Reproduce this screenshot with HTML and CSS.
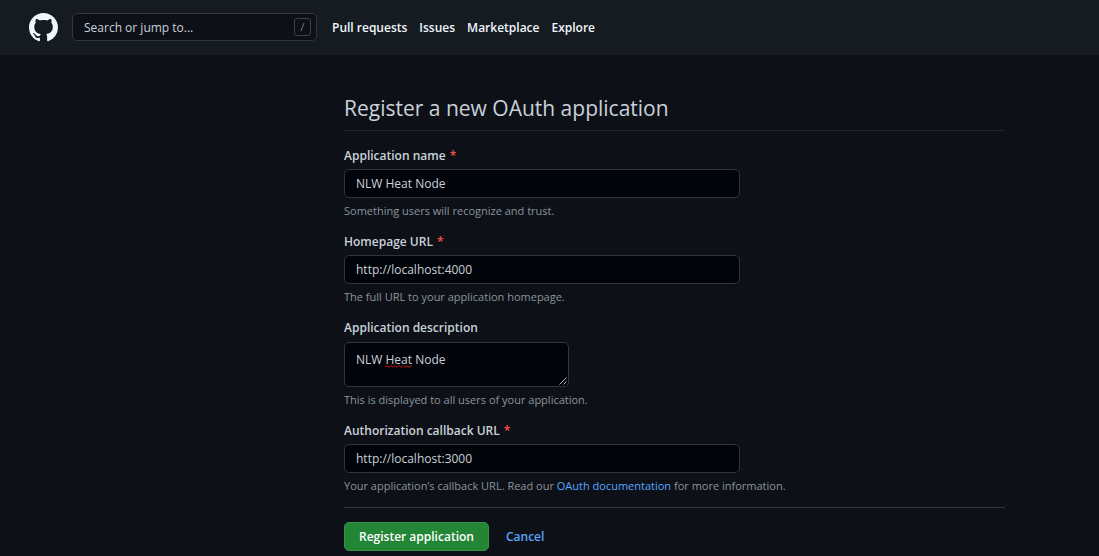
FILE: index.html
```html
<!DOCTYPE html>
<html lang="en">
<head>
<meta charset="utf-8">
<meta name="viewport" content="width=device-width, initial-scale=1">
<title>Register a new OAuth application</title>
<link rel="stylesheet" href="styles.css">
</head>
<body>
<header class="header">
  <a class="logo" href="#" aria-label="Homepage">
    <svg viewBox="0 0 16 16" width="29" height="29" aria-hidden="true"><path fill="currentColor" fill-rule="evenodd" d="M8 0C3.58 0 0 3.58 0 8c0 3.54 2.29 6.53 5.47 7.59.4.07.55-.17.55-.38 0-.19-.01-.82-.01-1.49-2.01.37-2.53-.49-2.69-.94-.09-.23-.48-.94-.82-1.13-.28-.15-.68-.52-.01-.53.63-.01 1.08.58 1.23.82.72 1.21 1.87.87 2.33.66.07-.52.28-.87.51-1.07-1.78-.2-3.64-.89-3.64-3.95 0-.87.31-1.59.82-2.15-.08-.2-.36-1.02.08-2.12 0 0 .67-.21 2.2.82.64-.18 1.32-.27 2-.27.68 0 1.36.09 2 .27 1.53-1.04 2.2-.82 2.2-.82.44 1.1.16 1.92.08 2.12.51.56.82 1.27.82 2.15 0 3.07-1.87 3.75-3.65 3.95.29.25.54.73.54 1.48 0 1.07-.01 1.93-.01 2.2 0 .21.15.46.55.38A8.013 8.013 0 0 0 16 8c0-4.42-3.58-8-8-8z"/></svg>
  </a>
  <div class="search">
    <input class="search-input" type="text" placeholder="Search or jump to..." aria-label="Search or jump to">
    <svg class="slash" viewBox="0 0 17 18" width="17" height="18" aria-hidden="true"><rect x=".5" y=".5" width="16" height="17" rx="2.5" fill="none" stroke="#3c4148"/><path d="M10 5 7 13" fill="none" stroke="#6e757d"/></svg>
  </div>
  <nav class="nav" aria-label="Global">
    <a href="#">Pull requests</a>
    <a href="#">Issues</a>
    <a href="#">Marketplace</a>
    <a href="#">Explore</a>
  </nav>
</header>
<main class="page">
  <form class="content">
    <h1 class="title">Register a new OAuth application</h1>
    <div class="field">
      <label for="app-name">Application name <span class="required">*</span></label>
      <input class="control" id="app-name" type="text" value="NLW Heat Node" required>
      <p class="hint">Something users will recognize and trust.</p>
    </div>
    <div class="field">
      <label for="app-url">Homepage URL <span class="required">*</span></label>
      <input class="control" id="app-url" type="text" value="http://localhost:4000" required>
      <p class="hint">The full URL to your application homepage.</p>
    </div>
    <div class="field">
      <label for="app-description">Application description</label>
      <div class="textarea-wrap">
        <textarea class="control textarea" id="app-description">NLW Heat Node</textarea>
        <svg class="squiggle" viewBox="0 0 27 3" width="27" height="3" aria-hidden="true"><path d="M0 2 2 .7 4 2.3 6 .7 8 2.3 10 .7 12 2.3 14 .7 16 2.3 18 .7 20 2.3 22 .7 24 2.3 27 .7" fill="none" stroke="#c01515"/></svg>
        <svg class="grip" viewBox="0 0 8 8" width="8" height="8" aria-hidden="true"><path d="M.5 7.5l7-7M4.500 7.500l3-3" fill="none" stroke="#b8b8b8"/></svg>
      </div>
      <p class="hint">This is displayed to all users of your application.</p>
    </div>
    <div class="field">
      <label for="app-callback">Authorization callback URL <span class="required">*</span></label>
      <input class="control" id="app-callback" type="text" value="http://localhost:3000" required>
      <p class="hint">Your application’s callback URL. Read our <a href="#">OAuth documentation</a> for more information.</p>
    </div>
    <div class="actions">
      <button class="submit" type="submit">Register application</button>
      <a class="cancel" href="#">Cancel</a>
    </div>
  </form>
</main>
</body>
</html>
```
FILE: styles.css
```css
* {
  box-sizing: border-box;
}

body {
  margin: 0;
  background: #0d1117;
  color: #c9d1d9;
  font: 12px/20px "Segoe UI", "Open Sans", "Noto Sans", sans-serif;
}

a {
  color: #58a6ff;
  text-decoration: none;
}

.header {
  display: flex;
  align-items: center;
  padding: 13px 29px;
  background: #161b22;
}

.logo {
  display: flex;
  margin-right: 14px;
  color: #f0f6fc;
}

.search {
  position: relative;
  align-self: flex-start;
  width: 245px;
  margin-right: 15px;
}

.search-input {
  display: block;
  width: 100%;
  height: 28px;
  padding: 0 32px 0 11px;
  border: 1px solid #30363d;
  border-radius: 5px;
  background: #0d1117;
  color: #c9d1d9;
  font: inherit;
}

.search-input::placeholder {
  color: #c9d1d9;
  opacity: 1;
}

.slash {
  position: absolute;
  top: 5px;
  right: 6px;
}

.nav {
  display: flex;
  gap: 12px;
  font-weight: 600;
}

.nav a {
  color: #f0f6fc;
}

.page {
  padding: 36px 94px 5px;
}

.content {
  margin-left: 250px;
}

.title {
  margin: 0 0 15px;
  padding-bottom: 5px;
  border-bottom: 1px solid #21262d;
  font-size: 21px;
  font-weight: 400;
  line-height: 34px;
}

.field {
  margin-bottom: 11px;
}

.field label {
  display: block;
  margin-bottom: 3px;
  font-weight: 600;
}

.required {
  margin-left: 1px;
  color: #f85149;
}

.control {
  display: block;
  width: 100%;
  max-width: 396px;
  height: 29px;
  padding: 0 11px;
  border: 1px solid #30363d;
  border-radius: 5px;
  background: #010409;
  color: #c9d1d9;
  font: inherit;
}

.textarea-wrap {
  position: relative;
  max-width: 225px;
  margin-top: 4px;
}

.textarea {
  height: 45px;
  padding-top: 7px;
  resize: none;
}

.squiggle {
  position: absolute;
  top: 23px;
  left: 41px;
}

.grip {
  position: absolute;
  right: 2px;
  bottom: 2px;
}

.hint {
  margin: 3px 0 0;
  color: #8b949e;
  font-size: 11px;
}

.actions {
  display: flex;
  align-items: center;
  gap: 17px;
  padding-top: 14px;
  border-top: 1px solid #30363d;
  font-weight: 600;
}

.submit {
  height: 29px;
  padding: 0 14px;
  border: 1px solid #36914a;
  border-radius: 5px;
  background: #238636;
  color: #fff;
  font: inherit;
}
```
